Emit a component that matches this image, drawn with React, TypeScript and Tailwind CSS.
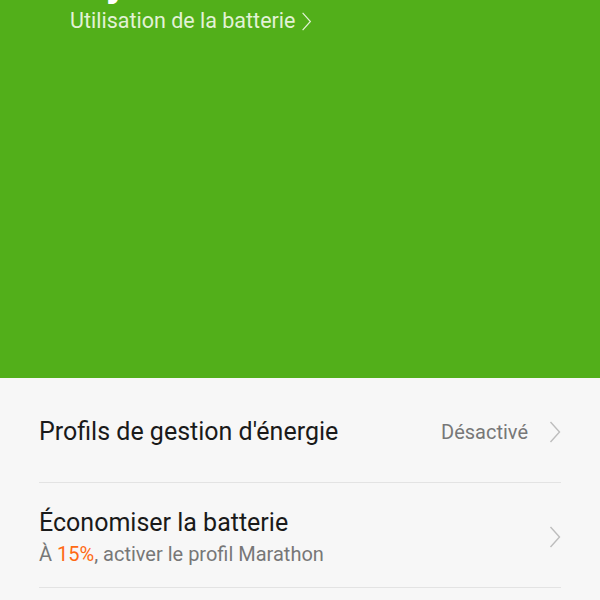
function Chevron({ className }: { className?: string }) {
  return (
    <svg viewBox="0 0 12 22" fill="none" stroke="currentColor" strokeWidth={1.4} className={className}>
      <polyline points="1.5,1 10.5,11 1.5,21" />
    </svg>
  );
}

function Row({ title, sub, value }: { title: string; sub?: React.ReactNode; value?: string }) {
  return (
    <div className="flex h-[105px] items-center border-b border-[#e3e3e3] pt-[3px]">
      <div className="flex flex-1 flex-col">
        <span className="text-[25px] leading-[32px] text-[#1a1a1a]">{title}</span>
        {sub && <span className="mt-[2px] text-[20px] leading-[26px] text-[#777]">{sub}</span>}
      </div>
      {value && <span className="mr-[21px] text-[20px] text-[#777]">{value}</span>}
      <Chevron className="h-[22px] w-[12px] text-[#bdbdbd]" />
    </div>
  );
}

export default function App() {
  return (
    <div className="h-[600px] w-[600px] overflow-hidden bg-[#f7f7f7]" style={{ fontFamily: "Roboto, sans-serif" }}>
      <div className="flex h-[378px] flex-col bg-[#52af1a] pl-[70px]">
        <div className="-mt-[44px] text-[44px] leading-[48px] font-medium text-white">
          <span className="ml-[4px]">8 jours</span>
        </div>
        <div className="mt-[4px] flex items-center text-[21.5px] leading-[26px] text-[#e2f2d6]">
          Utilisation de la batterie
          <Chevron className="ml-[6px] h-[19px] w-[11px]" />
        </div>
      </div>
      <div className="px-[39px]">
        <Row title="Profils de gestion d'énergie" value="Désactivé" />
        <Row
          title="Économiser la batterie"
          sub={
            <>
              À <span className="text-[#ff6a13]">15%</span>, activer le profil Marathon
            </>
          }
        />
      </div>
    </div>
  );
}
